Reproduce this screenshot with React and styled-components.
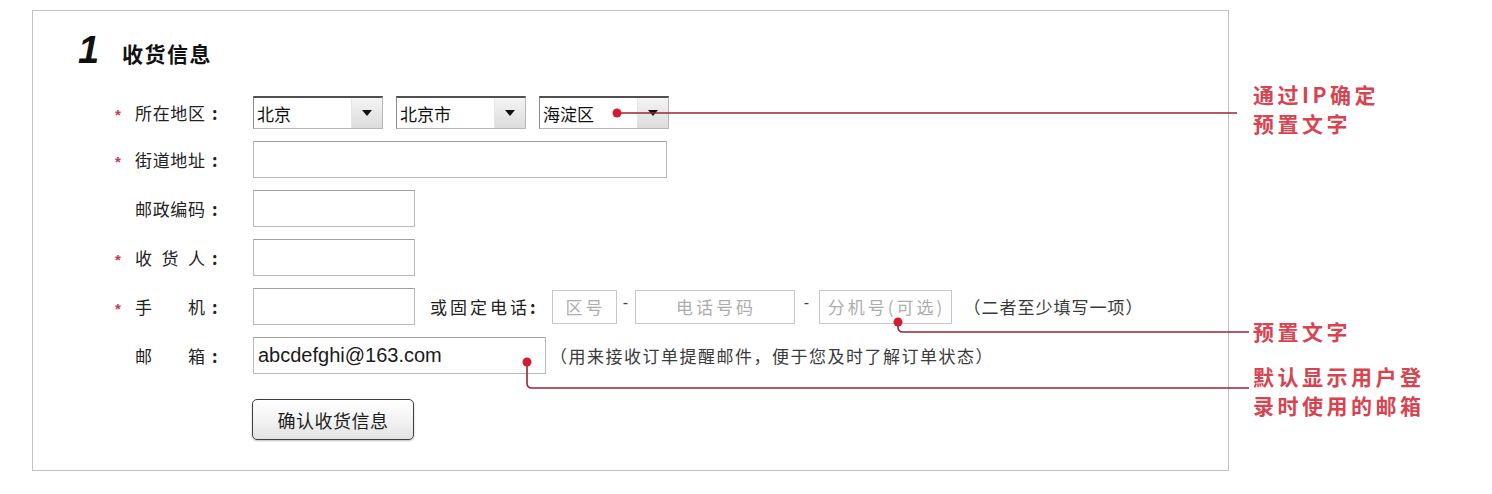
import React from "react";
import styled, { createGlobalStyle } from "styled-components";

const GlobalStyle = createGlobalStyle`
  html, body {
    margin: 0;
    padding: 0;
    background: #fff;
  }
  body {
    font-family: "Noto Sans CJK SC", "Liberation Sans", sans-serif;
    color: #222;
  }
`;

const Page = styled.div`
  position: relative;
  display: flex;
  align-items: flex-start;
  width: 1492px;
  height: 494px;
  padding: 10px 0 0 32px;
  box-sizing: border-box;
  overflow: hidden;
`;

const Panel = styled.section`
  width: 1197px;
  height: 461px;
  box-sizing: border-box;
  border: 1px solid #c2c2c2;
  padding: 19px 0 0 45px;
`;

const Title = styled.h2`
  display: flex;
  align-items: center;
  height: 40px;
  margin: 0;
  font-weight: bold;
`;

const Step = styled.span`
  font-family: "Liberation Sans", Arial, sans-serif;
  font-style: italic;
  font-size: 38px;
  font-weight: bold;
  line-height: 1;
  color: #111;
  width: 44px;
`;

const TitleText = styled.span`
  font-size: 21px;
  letter-spacing: 1.5px;
  color: #111;
  margin-top: 6px;
`;

const Form = styled.div`
  display: flex;
  flex-direction: column;
  gap: 12px;
  margin: 26px 0 0 35px;
`;

const Row = styled.div`
  display: flex;
  align-items: center;
  height: ${(p) => p.$h || 37}px;
  margin-top: ${(p) => p.$mt || 0}px;
`;

const Star = styled.span`
  width: 22px;
  padding-left: 2px;
  color: #c23a55;
  font-family: "Liberation Sans", sans-serif;
  font-size: 15px;
  font-weight: bold;
  padding-top: 3px;
  box-sizing: border-box;
`;

const Label = styled.span`
  display: flex;
  width: 118px;
  font-size: 17px;
  color: #222;
`;

const LabelName = styled.span`
  width: 70px;
  text-align: justify;
  text-align-last: justify;
`;

const Colon = styled.span`
  margin-left: 7px;
  font-weight: bold;
`;

const Select = styled.div`
  display: flex;
  align-items: stretch;
  width: 130px;
  height: 33px;
  box-sizing: border-box;
  border: 1px solid #b8b8b8;
  border-top: 2px solid #505050;
  border-left-color: #8a8a8a;
  margin-right: 13px;
  background: #fff;
`;

const SelectValue = styled.span`
  flex: 1;
  display: flex;
  align-items: center;
  padding-left: 3px;
  font-size: 17px;
  color: #111;
`;

const SelectArrow = styled.span`
  width: 30px;
  display: flex;
  align-items: center;
  justify-content: center;
  background: linear-gradient(#f4f4f4, #dcdcdc);
  border-left: 1px solid #e6e6e6;

  &::after {
    content: "";
    border-left: 5px solid transparent;
    border-right: 5px solid transparent;
    border-top: 6px solid #111;
  }
`;

const Input = styled.div`
  width: ${(p) => p.$w}px;
  height: 37px;
  box-sizing: border-box;
  border: 1px solid #b9b9b9;
  border-top-color: #a0a0a0;
  display: flex;
  align-items: center;
  padding-left: 4px;
  font-family: "Liberation Sans", Arial, sans-serif;
  font-size: 20px;
  color: #1a1a1a;
  background: #fff;
`;

const Hint = styled.span`
  font-size: 17px;
  letter-spacing: ${(p) => p.$ls ?? 1.5}px;
  color: #3a3a3a;
  margin-left: ${(p) => p.$ml || 0}px;
`;

const OrLabel = styled.span`
  margin: 0 16px 0 15px;
  font-size: 17px;
  letter-spacing: 3px;
  color: #222;

  & > b {
    letter-spacing: 0;
  }
`;

const PhoneBox = styled.div`
  width: ${(p) => p.$w}px;
  height: 34px;
  box-sizing: border-box;
  border: 1px solid #c8c8c8;
  display: flex;
  align-items: center;
  justify-content: center;
  font-size: 17px;
  letter-spacing: 3px;
  color: #adadad;
  padding-left: 3px;
`;

const Dash = styled.span`
  width: ${(p) => p.$w || 18}px;
  text-align: center;
  font-family: "Liberation Sans", sans-serif;
  font-size: 16px;
  color: #444;
  padding-bottom: 8px;
`;

const Button = styled.button`
  margin-left: 139px;
  width: 162px;
  height: 41px;
  border: 1px solid #3e3e3e;
  border-radius: 5px;
  background: linear-gradient(#ffffff, #f2f2f2 55%, #e2e2e2);
  box-shadow: 0 1px 2px rgba(0, 0, 0, 0.25);
  font-family: "Noto Sans CJK SC", sans-serif;
  font-size: 18px;
  color: #1e1e1e;
  letter-spacing: 0.5px;
  padding: 0;
`;

const Notes = styled.aside`
  display: flex;
  flex-direction: column;
  margin-left: 24px;
`;

const Note = styled.p`
  margin: ${(p) => p.$mt}px 0 0;
  font-size: 21px;
  font-weight: bold;
  line-height: 29px;
  letter-spacing: 3.5px;
  color: #d8434f;
`;

const Overlay = styled.svg`
  position: absolute;
  left: 0;
  top: 0;
  pointer-events: none;
`;

const FormLabel = ({ req, name }) => (
  <>
    <Star>{req ? "*" : ""}</Star>
    <Label>
      <LabelName>{name}</LabelName>
      <Colon>:</Colon>
    </Label>
  </>
);

const Dropdown = ({ value }) => (
  <Select>
    <SelectValue>{value}</SelectValue>
    <SelectArrow />
  </Select>
);

export default function App() {
  return (
    <>
      <GlobalStyle />
      <Page>
        <Panel>
          <Title>
            <Step>1</Step>
            <TitleText>收货信息</TitleText>
          </Title>
          <Form>
            <Row $h={33}>
              <FormLabel req name="所在地区" />
              <Dropdown value="北京" />
              <Dropdown value="北京市" />
              <Dropdown value="海淀区" />
            </Row>
            <Row>
              <FormLabel req name="街道地址" />
              <Input $w={414} />
            </Row>
            <Row>
              <FormLabel name="邮政编码" />
              <Input $w={162} />
            </Row>
            <Row>
              <FormLabel req name="收货人" />
              <Input $w={162} />
            </Row>
            <Row>
              <FormLabel req name="手机" />
              <Input $w={162} />
              <OrLabel>
                或固定电话<b>:</b>
              </OrLabel>
              <PhoneBox $w={65}>区号</PhoneBox>
              <Dash>-</Dash>
              <PhoneBox $w={160}>电话号码</PhoneBox>
              <Dash $w={24}>-</Dash>
              <PhoneBox $w={133}>分机号(可选)</PhoneBox>
              <Hint $ml={12} $ls={1}>（二者至少填写一项）</Hint>
            </Row>
            <Row>
              <FormLabel name="邮箱" />
              <Input $w={293}>abcdefghi@163.com</Input>
              <Hint $ml={4} $ls={1.5}>（用来接收订单提醒邮件，便于您及时了解订单状态）</Hint>
            </Row>
            <Row $h={41} $mt={13}>
              <Button>确认收货信息</Button>
            </Row>
          </Form>
        </Panel>
        <Notes>
          <Note $mt={70}>
            通过IP确定
            <br />
            预置文字
          </Note>
          <Note $mt={179}>预置文字</Note>
          <Note $mt={16}>
            默认显示用户登
            <br />
            录时使用的邮箱
          </Note>
        </Notes>
        <Overlay width="1492" height="494" viewBox="0 0 1492 494">
          <g fill="none" stroke="#9b2436" strokeWidth="1.6">
            <path d="M617 113 H1237" />
            <path d="M898 322 V327 Q898 332 903 332 H1249" />
            <path d="M527 362 V383 Q527 388 532 388 H1249" />
          </g>
          <g fill="#d21c32">
            <circle cx="617" cy="113" r="4.5" />
            <circle cx="898" cy="322" r="4.5" />
            <circle cx="527" cy="362" r="4.5" />
          </g>
        </Overlay>
      </Page>
    </>
  );
}
